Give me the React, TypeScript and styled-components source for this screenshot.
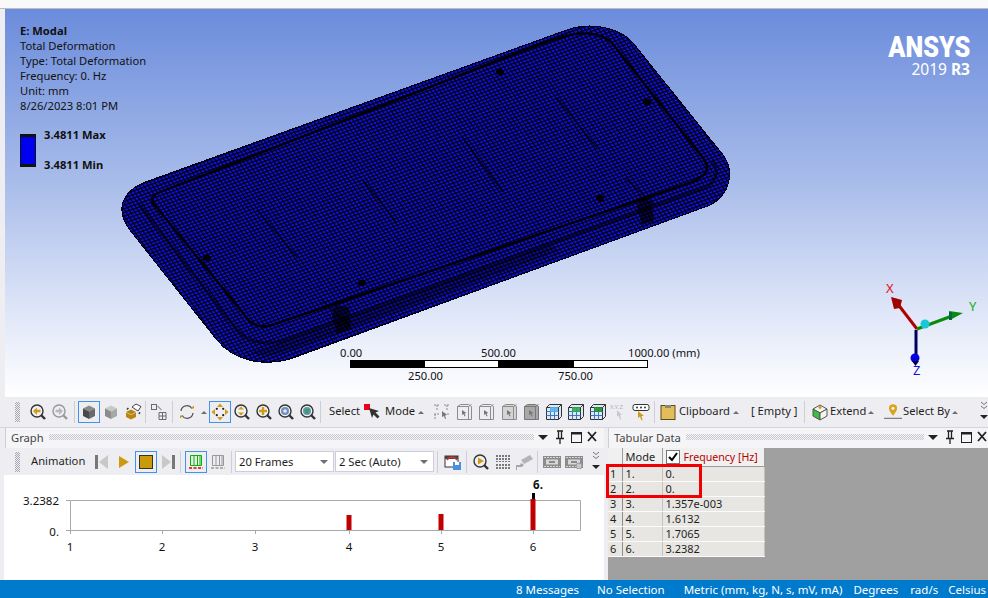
import React from 'react';
import styled, { createGlobalStyle } from 'styled-components';

const UI_FONT = `"Noto Sans", "Open Sans", sans-serif`;

const GlobalStyle = createGlobalStyle`
  html, body {
    margin: 0;
    padding: 0;
    background: #eeeef2;
    overflow: hidden;
  }
  #root {
    width: 988px;
    height: 598px;
  }
  * {
    box-sizing: border-box;
  }
`;

const dots = (color: string) =>
  `background-image: repeating-conic-gradient(${color} 0 25%, transparent 0 50%); background-size: 2px 2px;`;

const Page = styled.div`
  width: 988px;
  height: 598px;
  display: flex;
  flex-direction: column;
  font-family: ${UI_FONT};
  font-size: 11.2px;
  color: #1e1e1e;
  background: #eeeef2;
`;

const TopStrip = styled.div`
  height: 9px;
  flex-shrink: 0;
  background: #f9f9f9;
  border-bottom: 1px solid #bcbcbc;
`;

const ViewRow = styled.div`
  height: 388px;
  flex-shrink: 0;
  padding-left: 5px;
`;

const Viewport = styled.div`
  position: relative;
  width: 983px;
  height: 388px;
  overflow: hidden;
  background: linear-gradient(#6b8cdc 0%, #a9bdea 45%, #dfe6f8 78%, #ffffff 100%);
`;

const Scene = styled.svg`
  position: absolute;
  left: 0;
  top: 0;
`;

const Annotation = styled.div`
  position: absolute;
  left: 15px;
  top: 14px;
  line-height: 15px;
  color: #111;
`;

const AnnotationLine = styled.div<{ $bold?: boolean }>`
  font-weight: ${({ $bold }) => ($bold ? 700 : 400)};
  white-space: nowrap;
`;

const Legend = styled.div`
  position: absolute;
  left: 15px;
  top: 125px;
  display: flex;
  gap: 8px;
`;

const LegendBar = styled.div`
  width: 16px;
  height: 33px;
  background: #0000f0;
  border: solid #111;
  border-width: 3px 1px;
`;

const LegendLabels = styled.div`
  height: 33px;
  margin-top: -7px;
  display: flex;
  flex-direction: column;
  gap: 15px;
  font-weight: 700;
  line-height: 15px;
  color: #111;
`;

const Brand = styled.div`
  position: absolute;
  right: 18px;
  top: 24px;
  display: flex;
  flex-direction: column;
  align-items: flex-end;
  color: #fff;
`;

const BrandName = styled.div`
  font-family: "Roboto", sans-serif;
  font-weight: 900;
  font-size: 29px;
  line-height: 28px;
  transform: scaleX(0.87);
  transform-origin: right center;
`;

const BrandVersion = styled.div`
  font-size: 15.5px;
  line-height: 17px;
  b {
    font-weight: 700;
  }
`;

const ScaleBlock = styled.div`
  position: absolute;
  left: 345px;
  top: 337px;
  width: 298px;
  height: 42px;
`;

const ScaleTrack = styled.div`
  position: absolute;
  left: 0;
  top: 14px;
  width: 298px;
  height: 8px;
  display: flex;
  border: 1px solid #000;
`;

const ScaleSegment = styled.div<{ $dark: boolean; $w: number }>`
  width: ${({ $w }) => $w}px;
  background: ${({ $dark }) => ($dark ? '#000' : '#fff')};
`;

const ScaleLabel = styled.div<{ $x: number; $y: number }>`
  position: absolute;
  left: ${({ $x }) => $x}px;
  top: ${({ $y }) => $y}px;
  line-height: 14px;
  white-space: nowrap;
  color: #111;
`;

const Toolbar = styled.div`
  height: 30px;
  flex-shrink: 0;
  display: flex;
  align-items: center;
  padding-left: 15px;
  background: #eeeef2;
  position: relative;
`;

const Grip = styled.div`
  width: 5px;
  height: 20px;
  margin-right: 7px;
  flex-shrink: 0;
  ${dots('#a8a8b0')}
`;

const ToolButton = styled.div<{ $active?: boolean; $w?: number }>`
  width: ${({ $w }) => $w ?? 22}px;
  height: 22px;
  flex-shrink: 0;
  display: flex;
  align-items: center;
  justify-content: center;
  border: 1px solid ${({ $active }) => ($active ? '#3e94ea' : 'transparent')};
`;

const Separator = styled.div<{ $l?: number; $r?: number }>`
  width: 1px;
  height: 22px;
  flex-shrink: 0;
  background: #ccced8;
  margin-left: ${({ $l }) => $l ?? 3}px;
  margin-right: ${({ $r }) => $r ?? 3}px;
`;

const ToolLabel = styled.span<{ $l?: number; $w?: number }>`
  margin-left: ${({ $l }) => $l ?? 0}px;
  margin-bottom: 2px;
  width: ${({ $w }) => ($w ? `${$w}px` : 'auto')};
  flex-shrink: 0;
  white-space: nowrap;
  line-height: 22px;
`;

const Caret = styled.span<{ $w?: number; $r?: number }>`
  width: ${({ $w }) => $w ?? 9}px;
  margin-right: ${({ $r }) => $r ?? 0}px;
  flex-shrink: 0;
  display: flex;
  justify-content: center;
  &::before {
    content: '';
    border-left: 3px solid transparent;
    border-right: 3px solid transparent;
    border-bottom: 3px solid #6d6d78;
  }
`;

const Overflow = styled.div`
  position: absolute;
  right: 0;
  top: 4px;
  width: 8px;
  display: flex;
  flex-direction: column;
  align-items: center;
`;

const Panels = styled.div`
  height: 153px;
  flex-shrink: 0;
  display: flex;
  gap: 4px;
  border-top: 1px solid #d4d4dc;
`;

const Panel = styled.section<{ $w: number }>`
  width: ${({ $w }) => $w}px;
  display: flex;
  flex-direction: column;
`;

const PanelHeader = styled.header<{ $offset: number }>`
  height: 20px;
  flex-shrink: 0;
  display: flex;
  align-items: center;
  padding: 0 0 2px 5px;
  background: #f5f5f7;
  border-left: 1px solid #ccced8;
  margin-left: ${({ $offset }) => $offset}px;
  color: #444;
`;

const HeaderDots = styled.div`
  flex: 1;
  height: 6px;
  margin: 0 4px 0 5px;
  ${dots('#c8c8d0')}
`;

const HeaderControls = styled.div<{ $w: number }>`
  width: ${({ $w }) => $w}px;
  height: 16px;
  flex-shrink: 0;
`;

const AnimationBar = styled(Toolbar)`
  height: 27px;
`;

const Combo = styled.div<{ $w: number }>`
  width: ${({ $w }) => $w}px;
  height: 21px;
  flex-shrink: 0;
  display: flex;
  align-items: center;
  justify-content: space-between;
  padding: 0 5px 0 3px;
  background: #fff;
  border: 1px solid #cccedb;
  margin-right: 1px;
  &::after {
    content: '';
    border-left: 4px solid transparent;
    border-right: 4px solid transparent;
    border-top: 4px solid #6d6d78;
  }
`;

const GraphArea = styled.div`
  flex: 1;
  margin-left: 4px;
  background: #fff;
`;

const GreyArea = styled.div`
  position: relative;
  flex: 1;
  background: #a0a0a0;
`;

const DataTable = styled.table`
  width: 156px;
  table-layout: fixed;
  border-collapse: collapse;
  font-size: 11px;
`;

const HeadCell = styled.th<{ $w: number }>`
  width: ${({ $w }) => $w}px;
  height: 18px;
  padding: 0 0 0 3px;
  background: #f0f0f0;
  border-right: 1px solid #9c9c9c;
  border-bottom: 1px solid #9c9c9c;
  font-weight: 400;
  text-align: left;
  line-height: 14px;
  white-space: nowrap;
`;

const FrequencyHead = styled.div`
  display: flex;
  align-items: center;
  gap: 4px;
  color: #b80000;
  font-size: 10.6px;
`;

const Checkbox = styled.span`
  width: 14px;
  height: 14px;
  display: flex;
  align-items: center;
  justify-content: center;
  background: #fff;
  border: 1px solid #777;
`;

const Cell = styled.td<{ $index?: boolean }>`
  height: 15px;
  padding: 0 0 0 ${({ $index }) => ($index ? 2 : 3)}px;
  background: #e8e6e2;
  border-right: 1px solid ${({ $index }) => ($index ? '#8e8e8e' : '#c4c2be')};
  border-bottom: 1px solid #fbfbfb;
  line-height: 14px;
`;

const Highlight = styled.div`
  position: absolute;
  left: -2px;
  top: 16px;
  width: 96px;
  height: 34px;
  border: 3px solid #f00000;
`;

const StatusBar = styled.footer`
  height: 18px;
  flex-shrink: 0;
  display: flex;
  justify-content: flex-end;
  align-items: center;
  padding-right: 2px;
  background: #007acc;
  color: #fff;
  font-size: 11.5px;
`;

const StatusItem = styled.span<{ $gap: number }>`
  margin-right: ${({ $gap }) => $gap}px;
  white-space: nowrap;
`;

function Mag({ gray, children }: { gray?: boolean; children?: React.ReactNode }) {
  return (
    <svg width="18" height="18" viewBox="0 0 18 18" opacity={gray ? 0.45 : 1}>
      <line x1="11.5" y1="11.5" x2="16" y2="16" stroke="#333" strokeWidth="2.4" />
      <circle cx="8" cy="8" r="6" fill="#eef0f2" stroke="#333" strokeWidth="1.4" />
      {children}
    </svg>
  );
}

const MagBack = () => (
  <Mag>
    <path d="M4 8l4-3.500v2.300h3.500v2.400H8V12z" fill="#d09a1a" />
  </Mag>
);
const MagForward = () => (
  <Mag gray>
    <path d="M12 8L8 4.500v2.300H4.500v2.400H8V12z" fill="#777" />
  </Mag>
);
const MagFit = () => (
  <Mag>
    <path d="M8 3.500l3 3H5zM8 12.500l3-3H5z" fill="#d09a1a" />
  </Mag>
);
const MagPlus = () => (
  <Mag>
    <path d="M6.800 4h2.400v2.800H12v2.400H9.200V12H6.800V9.200H4V6.800h2.800z" fill="#d09a1a" />
  </Mag>
);
const MagBox = () => (
  <Mag>
    <circle cx="8" cy="8" r="4" fill="#6e8fc2" />
    <circle cx="8" cy="8" r="1.800" fill="#e8e8f0" />
  </Mag>
);
const MagGreen = () => (
  <Mag>
    <circle cx="8" cy="8" r="4" fill="#6e8fc2" />
    <path d="M5.500 6h5l-1 4.500h-3z" fill="#2fa84f" />
  </Mag>
);

const Cube = ({ top, left, right }: { top: string; left: string; right: string }) => (
  <svg width="16" height="16" viewBox="0 0 16 16">
    <path d="M8 1.500l6 3-6 3-6-3z" fill={top} />
    <path d="M2 4.500l6 3V15l-6-3z" fill={left} />
    <path d="M14 4.500l-6 3V15l6-3z" fill={right} />
  </svg>
);

const OrangeCube = () => (
  <svg width="18" height="18" viewBox="0 0 18 18">
    <path d="M2 9l5-2.500L12 9l-5 2.500zM2 9.500l5 2.500v4.500l-5-2.500zM12 9.500L7 12v4.500l5-2.500z" fill="#b8860f" />
    <path d="M8 4l4-3 5 2.500-3 4.500z" fill="#fff" stroke="#444" />
    <path d="M3 6.500l2-2M15 11l1-2" stroke="#333" strokeWidth="1.500" strokeDasharray="2 1" />
  </svg>
);

const Windows = () => (
  <svg width="18" height="18" viewBox="0 0 18 18" fill="none" stroke="#6b6b6b">
    <rect x="1.500" y="1.500" width="5" height="5" />
    <path d="M9 9.500h7v7H9zM12.500 9.500v7M9 13h7" />
    <path d="M7.500 3l4 4" stroke="#a0a0a0" strokeWidth="1.500" />
  </svg>
);

const Rotate = () => (
  <svg width="18" height="18" viewBox="0 0 18 18" fill="none">
    <path d="M3 8a6 6 0 0 1 11-2.500" stroke="#555" strokeWidth="1.300" />
    <path d="M15 10a6 6 0 0 1-11 2.500" stroke="#555" strokeWidth="1.300" />
    <path d="M12.500 5.500h3.500V2.500z" fill="#c9971a" />
    <path d="M5.500 12.500H2v3z" fill="#c9971a" />
  </svg>
);

const Pan = () => (
  <svg width="18" height="18" viewBox="0 0 18 18">
    <path d="M9 .500l3 3.500H6zM9 17.500L6 14h6zM.500 9L4 6v6zM17.500 9L14 12V6z" fill="#d09a1a" />
    <circle cx="5.800" cy="5.800" r="1.100" fill="#222" />
    <circle cx="12.200" cy="5.800" r="1.100" fill="#222" />
    <circle cx="5.800" cy="12.200" r="1.100" fill="#222" />
    <circle cx="12.200" cy="12.200" r="1.100" fill="#222" />
  </svg>
);

const SelectMode = () => (
  <svg width="18" height="18" viewBox="0 0 18 18">
    <rect x="0" y="1" width="6" height="6" fill="#e8001c" />
    <path d="M5 5l10 3-3.500 1.500 4 4-2 2-4-4L8 15z" fill="#333" />
  </svg>
);

const Points = () => (
  <svg width="18" height="18" viewBox="0 0 18 18" fill="none" stroke="#8c8c8c">
    <path d="M1 2h6M4 2v5M1 11h6M2 11v6M11 2h6M14 2v5M11 11h5" strokeDasharray="2 1" />
    <path d="M9 8l5 4-2 .500 1 3-1 .500-1-3-2 1z" fill="#777" stroke="none" />
  </svg>
);

const Wire = ({ fill = 'none', edge = '#8c8c8c' }: { fill?: string; edge?: string }) => (
  <svg width="18" height="18" viewBox="0 0 18 18" stroke={edge}>
    <path d="M1.500 3.500l3-2h8l3 2v13h-14z" fill={fill} />
    <path d="M1.500 3.500h11l3-2M12.500 3.500v13" fill="none" />
    <path d="M6 7l4.500 3-2 .500 1 2.500-1 .500-1-2.500-1.500 1z" fill="#777" stroke="none" />
  </svg>
);

const Mesh = ({ accent }: { accent: string }) => (
  <svg width="18" height="18" viewBox="0 0 18 18" stroke="#333" fill="none">
    <path d="M1.500 4.500l3-3h12v12l-3 3h-12z" fill="#dfe8f5" />
    <path d="M1.500 4.500h12v12M13.500 4.500l3-3" />
    <path d="M5.500 4.500v12M9.500 4.500v12M1.500 8.500h12M1.500 12.500h12" stroke="#3a78c8" />
    <rect x="5" y="4" width="8" height="5" fill={accent} stroke="none" opacity=".9" />
  </svg>
);

const XyzPick = () => (
  <svg width="20" height="18" viewBox="0 0 20 18">
    <text x="0" y="6" fontSize="6" fill="#b0b0b8" fontFamily="Noto Sans">X.Y.Z</text>
    <path d="M7 7l5 5-2 0 1 4-1 .500-1.500-4L7 13.500z" fill="#c8c8d0" />
  </svg>
);

const TagPick = () => (
  <svg width="20" height="18" viewBox="0 0 20 18">
    <rect x="1" y="1.500" width="16" height="6" rx="2" fill="#fff" stroke="#333" />
    <circle cx="5" cy="4.500" r="1" fill="#333" />
    <circle cx="9" cy="4.500" r="1" fill="#333" />
    <circle cx="13" cy="4.500" r="1" fill="#333" />
    <path d="M6 8l6 5-2.500 0 1 4-1 .500-1.500-4L6 15z" fill="#d09a1a" />
  </svg>
);

const ClipboardIcon = () => (
  <svg width="16" height="16" viewBox="0 0 16 16">
    <rect x="1" y="1.500" width="14" height="14" fill="#e3bd5a" stroke="#5a4a20" />
    <rect x="5" y="1" width="6" height="3" fill="#8a8578" />
  </svg>
);

const ExtendIcon = () => (
  <svg width="18" height="18" viewBox="0 0 18 18">
    <path d="M2 6l7-4 7 4-7 4z" fill="#f4f4f0" stroke="#555" />
    <path d="M2 6l7 4v7l-7-4z" fill="#3cc03c" stroke="#555" />
    <path d="M16 6l-7 4v7l7-4z" fill="#f4f4f0" stroke="#555" />
    <path d="M7.500 4.500h3M9 3v3" stroke="#c9971a" strokeWidth="1.400" />
  </svg>
);

const SelectByIcon = () => (
  <svg width="20" height="18" viewBox="0 0 20 18">
    <path d="M10 .500a4.500 4.500 0 0 1 4.500 4.500c0 3-4.500 8-4.500 8S5.500 8 5.500 5A4.500 4.500 0 0 1 10 .500z" fill="#d9a41e" />
    <circle cx="10" cy="5" r="1.600" fill="#fff" />
    <path d="M0 16h20" stroke="#555" />
  </svg>
);

const FirstFrame = ({ flip }: { flip?: boolean }) => (
  <svg width="14" height="16" viewBox="0 0 14 16">
    <g transform={flip ? 'translate(14 0) scale(-1 1)' : undefined}>
      <rect x="0" y="1" width="3" height="14" fill="#777" />
      <path d="M13 1v14L4 8z" fill="#c8c8c8" />
    </g>
  </svg>
);

const Play = () => (
  <svg width="12" height="14" viewBox="0 0 12 14">
    <path d="M1 1l10 6-10 6z" fill="#cc9a0e" />
  </svg>
);

const Stop = () => (
  <svg width="14" height="14" viewBox="0 0 14 14">
    <rect x=".5" y=".5" width="13" height="13" fill="#c99b0c" stroke="#333" />
  </svg>
);

const Frames = ({ color, base }: { color: string; base: string }) => (
  <svg width="16" height="16" viewBox="0 0 16 16" fill="none" stroke={color}>
    <path d="M2.500 1.500h11v10h-11zM6 1.500v10M9.500 1.500v10M12 1.500v10" />
    <path d="M1 14h14" stroke={base} strokeWidth="1.500" strokeDasharray="3 1.500" />
  </svg>
);

const FilmSave = () => (
  <svg width="18" height="18" viewBox="0 0 18 18">
    <rect x="1" y="3" width="13" height="11" fill="#fff" stroke="#333" />
    <path d="M1 3h13v3H1z" fill="#444" />
    <path d="M3 7a6 6 0 0 1 10 0" stroke="#d0342c" strokeWidth="1.500" fill="none" />
    <rect x="9" y="9" width="8" height="8" fill="#4b8fdc" />
    <rect x="11" y="9" width="4" height="3" fill="#fff" />
  </svg>
);

const MagPlay = () => (
  <Mag>
    <path d="M6 4.500l6 3.500-6 3.500z" fill="#d09a1a" />
  </Mag>
);

const DotGrid = () => (
  <svg width="16" height="16" viewBox="0 0 16 16" fill="#7a7a7a">
    {[1, 4, 7, 10, 13].map(y =>
      [1, 4, 7, 10, 13].map(x => <rect key={`${x}-${y}`} x={x} y={y} width="2" height={y === 7 ? 1 : 2} />),
    )}
  </svg>
);

const Camera = () => (
  <svg width="18" height="16" viewBox="0 0 18 16">
    <path d="M5 6l9-5 3 4-9 5z" fill="#b4b4b4" />
    <path d="M5 9l3 2-2 2H1v3H0v-5h4z" fill="#a6a6a6" />
  </svg>
);

const Film = ({ gear }: { gear?: boolean }) => (
  <svg width="18" height="14" viewBox="0 0 18 14">
    <rect x="0" y="1" width="18" height="12" fill="#8c8c8c" />
    <path d="M1 2.500h16M1 11.500h16" stroke="#d8d8d8" strokeDasharray="2 1" />
    <rect x="3" y="4.500" width="12" height="5" fill="#d8d8d8" />
    <rect x="6" y="6" width="6" height="2" fill="#8a8a8a" />
    {gear && <circle cx="14" cy="11" r="3" fill="#c8c8c8" stroke="#999" />}
  </svg>
);

const OverflowMark = () => (
  <svg width="8" height="22" viewBox="0 0 8 22">
    <path d="M1 1l3 2.500L7 1M1 5l3 2.500L7 5" stroke="#777" fill="none" />
    <path d="M0 14h8l-4 4z" fill="#222" />
  </svg>
);

const DockControls = () => (
  <svg width="60" height="16" viewBox="0 0 60 16">
    <path d="M0 6h10l-5 5z" fill="#222" />
    <path d="M19 2h6M20.500 2v7M23.500 2v7M18 9.500h8M22 9.500V15" stroke="#222" strokeWidth="1.300" fill="none" />
    <rect x="33.500" y="3.500" width="10" height="10" fill="none" stroke="#222" />
    <path d="M33.500 4.500h10" stroke="#222" strokeWidth="2" />
    <path d="M50 3l8 9M58 3l-8 9" stroke="#222" strokeWidth="1.800" />
  </svg>
);

const GROOVE_OUTER =
  'M160 192 L520 52 C 560 36 592 24 612 43 L703 158 C 712 170 705 176 690 183 L272 325 C 258 330 248 322 243 313 L153 203 C 150 198 155 194 160 192 Z';
const BODY =
  'M143 183 L567 30 C 590 22 622 26 637 48 L723 155 C 735 172 730 195 710 205 L290 359 C 265 366 235 362 217 340 L130 230 C 115 210 122 192 143 183 Z';

function ModelScene() {
  return (
    <Scene width="983" height="388" viewBox="5 9 983 388">
      <defs>
        <pattern id="meshCells" width="3.800" height="3.400" patternUnits="userSpaceOnUse" patternTransform="rotate(-20) skewX(14)">
          <rect width="3.800" height="3.400" fill="#1010f0" />
          <path d="M0 .6h3.800M.6 0v3.400" stroke="#000" strokeWidth="1.150" />
        </pattern>
      </defs>
      <path d={BODY} fill="url(#meshCells)" stroke="#02021a" strokeWidth="1.200" shapeRendering="crispEdges" />
      <path d={GROOVE_OUTER} fill="none" stroke="#000" strokeWidth="2.400" opacity=".95" />
      <path
        d="M138 203 L237 330 C 250 345 268 345 285 340 L704 188 C 716 183 720 172 712 160"
        fill="none"
        stroke="#000"
        strokeWidth="3"
        opacity=".55"
      />
      <path
        d="M557 98L597 148M463 138L503 192M257 210L297 257M363 180L397 223M625 178L655 205M322 300L348 325"
        stroke="#000"
        strokeWidth="1.400"
        opacity=".7"
      />
      <g fill="#000">
        <ellipse cx="500" cy="72" rx="4" ry="3" />
        <ellipse cx="647" cy="102" rx="4" ry="3" />
        <ellipse cx="600" cy="198" rx="4" ry="3" />
        <ellipse cx="207" cy="258" rx="4" ry="3" />
        <ellipse cx="362" cy="283" rx="4" ry="3" />
        <path d="M640 195l12 8 2 18-12 4-5-18zM335 305l14 2 2 22-14 5-5-18z" opacity=".65" />
      </g>
      <path d="M250 352l40-12 260-95 10 6-270 100-24 6z" fill="#000" opacity=".3" />
      <Triad />
    </Scene>
  );
}

function Triad() {
  return (
    <g>
      <path d="M917 329L897 303" stroke="#b00000" strokeWidth="3" />
      <path d="M891 297l11 3-2 8-6 1z" fill="#a00000" />
      <path d="M917 329L952 316" stroke="#0a8a0a" strokeWidth="3" />
      <path d="M963 313l-14-2 1 9z" fill="#0a8a0a" />
      <rect x="949" y="312" width="3" height="8" fill="#064" />
      <path d="M916 330v26" stroke="#000060" strokeWidth="3" />
      <circle cx="915" cy="358" r="4.500" fill="#0000e0" />
      <path d="M912 361h7l-3.500 5z" fill="#000040" />
      <circle cx="925" cy="324" r="4.500" fill="#18c8d8" />
      <text x="886" y="293" fontSize="13" fill="#e01010" fontFamily="Noto Sans">X</text>
      <text x="969" y="311" fontSize="13" fill="#10b010" fontFamily="Noto Sans">Y</text>
      <text x="913" y="375" fontSize="13" fill="#1010e0" fontFamily="Noto Sans">Z</text>
    </g>
  );
}

const FRAME_TICKS = [
  [1, 70],
  [2, 162],
  [3, 255],
  [4, 349],
  [5, 441],
  [6, 533],
];

const BARS = [
  { x: 349, top: 515 },
  { x: 441, top: 514 },
  { x: 533, top: 499 },
];

function FrequencyChart() {
  return (
    <svg width="600" height="105" viewBox="4 475 600 105" fontFamily="Noto Sans" fontSize="11.500" fill="#111">
      <path d="M70.500 500.500H580.500V530.500H70.500Z" fill="none" stroke="#a8a8a8" />
      <path d="M66 500.500h4M66 530.500h4" stroke="#a8a8a8" />
      {FRAME_TICKS.map(([n, x]) => (
        <g key={n}>
          <path d={`M${x + 0.5} 530v4`} stroke="#a8a8a8" />
          <text x={x} y="551" textAnchor="middle">{n}</text>
        </g>
      ))}
      {BARS.map(b => (
        <rect key={b.x} x={b.x - 2.500} y={b.top} width="5" height={530 - b.top} fill="#c00000" />
      ))}
      <rect x="532" y="493" width="3" height="6" fill="#000" />
      <text x="59" y="505" textAnchor="end">3.2382</text>
      <text x="59" y="536" textAnchor="end">0.</text>
      <text x="538" y="489" textAnchor="middle" fontWeight="700">6.</text>
    </svg>
  );
}

const ROWS = [
  ['1', '1.', '0.'],
  ['2', '2.', '0.'],
  ['3', '3.', '1.357e-003'],
  ['4', '4.', '1.6132'],
  ['5', '5.', '1.7065'],
  ['6', '6.', '3.2382'],
];

function MainToolbar() {
  return (
    <Toolbar>
      <Grip />
      <ToolButton><MagBack /></ToolButton>
      <ToolButton><MagForward /></ToolButton>
      <Separator $l={3} $r={3} />
      <ToolButton $active><Cube top="#8a8a8a" left="#4a4a4a" right="#6a6a6a" /></ToolButton>
      <ToolButton><Cube top="#c8c8c8" left="#8c8c8c" right="#a8a8a8" /></ToolButton>
      <ToolButton><OrangeCube /></ToolButton>
      <Separator $l={1} $r={2} />
      <ToolButton><Windows /></ToolButton>
      <Separator $l={2} $r={3} />
      <ToolButton><Rotate /></ToolButton>
      <Caret $w={11} />
      <ToolButton $active><Pan /></ToolButton>
      <ToolButton><MagFit /></ToolButton>
      <ToolButton><MagPlus /></ToolButton>
      <ToolButton><MagBox /></ToolButton>
      <ToolButton><MagGreen /></ToolButton>
      <Separator $l={1} $r={0} />
      <ToolLabel $l={8} $w={34}>Select</ToolLabel>
      <ToolButton $w={20}><SelectMode /></ToolButton>
      <ToolLabel $l={2} $w={31}>Mode</ToolLabel>
      <Caret $r={6} />
      <ToolButton><Points /></ToolButton>
      <ToolButton $w={23}><Wire /></ToolButton>
      <ToolButton><Wire /></ToolButton>
      <ToolButton $w={23}><Wire fill="#d4d4d4" /></ToolButton>
      <ToolButton><Wire fill="#a8a8a8" edge="#777" /></ToolButton>
      <ToolButton><Mesh accent="#5bb4f0" /></ToolButton>
      <ToolButton><Mesh accent="#2fa84f" /></ToolButton>
      <ToolButton><Mesh accent="#1f8f2f" /></ToolButton>
      <ToolButton><XyzPick /></ToolButton>
      <ToolButton><TagPick /></ToolButton>
      <Separator $l={1} $r={3} />
      <ToolButton $w={20}><ClipboardIcon /></ToolButton>
      <ToolLabel $l={1} $w={52}>Clipboard</ToolLabel>
      <Caret />
      <ToolLabel $l={11} $w={49}>[ Empty ]</ToolLabel>
      <Separator $l={4} $r={4} />
      <ToolButton $w={21}><ExtendIcon /></ToolButton>
      <ToolLabel $w={36}>Extend</ToolLabel>
      <Caret $r={8} />
      <ToolButton $w={20}><SelectByIcon /></ToolButton>
      <ToolLabel $w={47}>Select By</ToolLabel>
      <Caret />
      <Overflow><OverflowMark /></Overflow>
    </Toolbar>
  );
}

function PlaybackBar() {
  return (
    <AnimationBar>
      <Grip />
      <ToolLabel $l={4} $w={60}>Animation</ToolLabel>
      <ToolButton $w={21}><FirstFrame /></ToolButton>
      <ToolButton $w={23}><Play /></ToolButton>
      <ToolButton $active><Stop /></ToolButton>
      <ToolButton><FirstFrame flip /></ToolButton>
      <Separator $l={1} $r={4} />
      <ToolButton $active><Frames color="#00b800" base="#e00000" /></ToolButton>
      <ToolButton><Frames color="#999" base="#999" /></ToolButton>
      <Separator $l={2} $r={3} />
      <Combo $w={99}>20 Frames</Combo>
      <Combo $w={99}>2 Sec (Auto)</Combo>
      <Separator $l={2} $r={3} />
      <ToolButton $w={24}><FilmSave /></ToolButton>
      <Separator $l={1} $r={3} />
      <ToolButton><MagPlay /></ToolButton>
      <ToolButton><DotGrid /></ToolButton>
      <ToolButton><Camera /></ToolButton>
      <Separator $l={1} $r={3} />
      <ToolButton><Film /></ToolButton>
      <ToolButton><Film gear /></ToolButton>
      <ToolButton><OverflowMark /></ToolButton>
    </AnimationBar>
  );
}

export default function App() {
  return (
    <Page>
      <GlobalStyle />
      <TopStrip />
      <ViewRow>
        <Viewport>
          <ModelScene />
          <Annotation>
            <AnnotationLine $bold>E: Modal</AnnotationLine>
            <AnnotationLine>Total Deformation</AnnotationLine>
            <AnnotationLine>Type: Total Deformation</AnnotationLine>
            <AnnotationLine>Frequency: 0. Hz</AnnotationLine>
            <AnnotationLine>Unit: mm</AnnotationLine>
            <AnnotationLine>8/26/2023 8:01 PM</AnnotationLine>
          </Annotation>
          <Legend>
            <LegendBar />
            <LegendLabels>
              <span>3.4811 Max</span>
              <span>3.4811 Min</span>
            </LegendLabels>
          </Legend>
          <Brand>
            <BrandName>ANSYS</BrandName>
            <BrandVersion>2019 <b>R3</b></BrandVersion>
          </Brand>
          <ScaleBlock>
            <ScaleLabel $x={-10} $y={0}>0.00</ScaleLabel>
            <ScaleLabel $x={131} $y={0}>500.00</ScaleLabel>
            <ScaleLabel $x={278} $y={0}>1000.00 (mm)</ScaleLabel>
            <ScaleTrack>
              <ScaleSegment $dark $w={74} />
              <ScaleSegment $dark={false} $w={73} />
              <ScaleSegment $dark $w={76} />
              <ScaleSegment $dark={false} $w={73} />
            </ScaleTrack>
            <ScaleLabel $x={58} $y={23}>250.00</ScaleLabel>
            <ScaleLabel $x={208} $y={23}>750.00</ScaleLabel>
          </ScaleBlock>
        </Viewport>
      </ViewRow>
      <MainToolbar />
      <Panels>
        <Panel $w={604}>
          <PanelHeader $offset={5}>
            Graph
            <HeaderDots />
            <HeaderControls $w={66}><DockControls /></HeaderControls>
          </PanelHeader>
          <PlaybackBar />
          <GraphArea><FrequencyChart /></GraphArea>
        </Panel>
        <Panel $w={380}>
          <PanelHeader $offset={0}>
            Tabular Data
            <HeaderDots />
            <HeaderControls $w={60}><DockControls /></HeaderControls>
          </PanelHeader>
          <GreyArea>
            <DataTable>
              <thead>
                <tr>
                  <HeadCell $w={14} />
                  <HeadCell $w={40}>Mode</HeadCell>
                  <HeadCell $w={102}>
                    <FrequencyHead>
                      <Checkbox>
                        <svg width="10" height="10" viewBox="0 0 10 10">
                          <path d="M1 5l3 3 5-7" fill="none" stroke="#000" strokeWidth="2" />
                        </svg>
                      </Checkbox>
                      Frequency [Hz]
                    </FrequencyHead>
                  </HeadCell>
                </tr>
              </thead>
              <tbody>
                {ROWS.map(row => (
                  <tr key={row[0]}>
                    <Cell $index>{row[0]}</Cell>
                    <Cell>{row[1]}</Cell>
                    <Cell>{row[2]}</Cell>
                  </tr>
                ))}
              </tbody>
            </DataTable>
            <Highlight />
          </GreyArea>
        </Panel>
      </Panels>
      <StatusBar>
        <StatusItem $gap={18}>8 Messages</StatusItem>
        <StatusItem $gap={19}>No Selection</StatusItem>
        <StatusItem $gap={11}>Metric (mm, kg, N, s, mV, mA)</StatusItem>
        <StatusItem $gap={12}>Degrees</StatusItem>
        <StatusItem $gap={10}>rad/s</StatusItem>
        <StatusItem $gap={0}>Celsius</StatusItem>
      </StatusBar>
    </Page>
  );
}
